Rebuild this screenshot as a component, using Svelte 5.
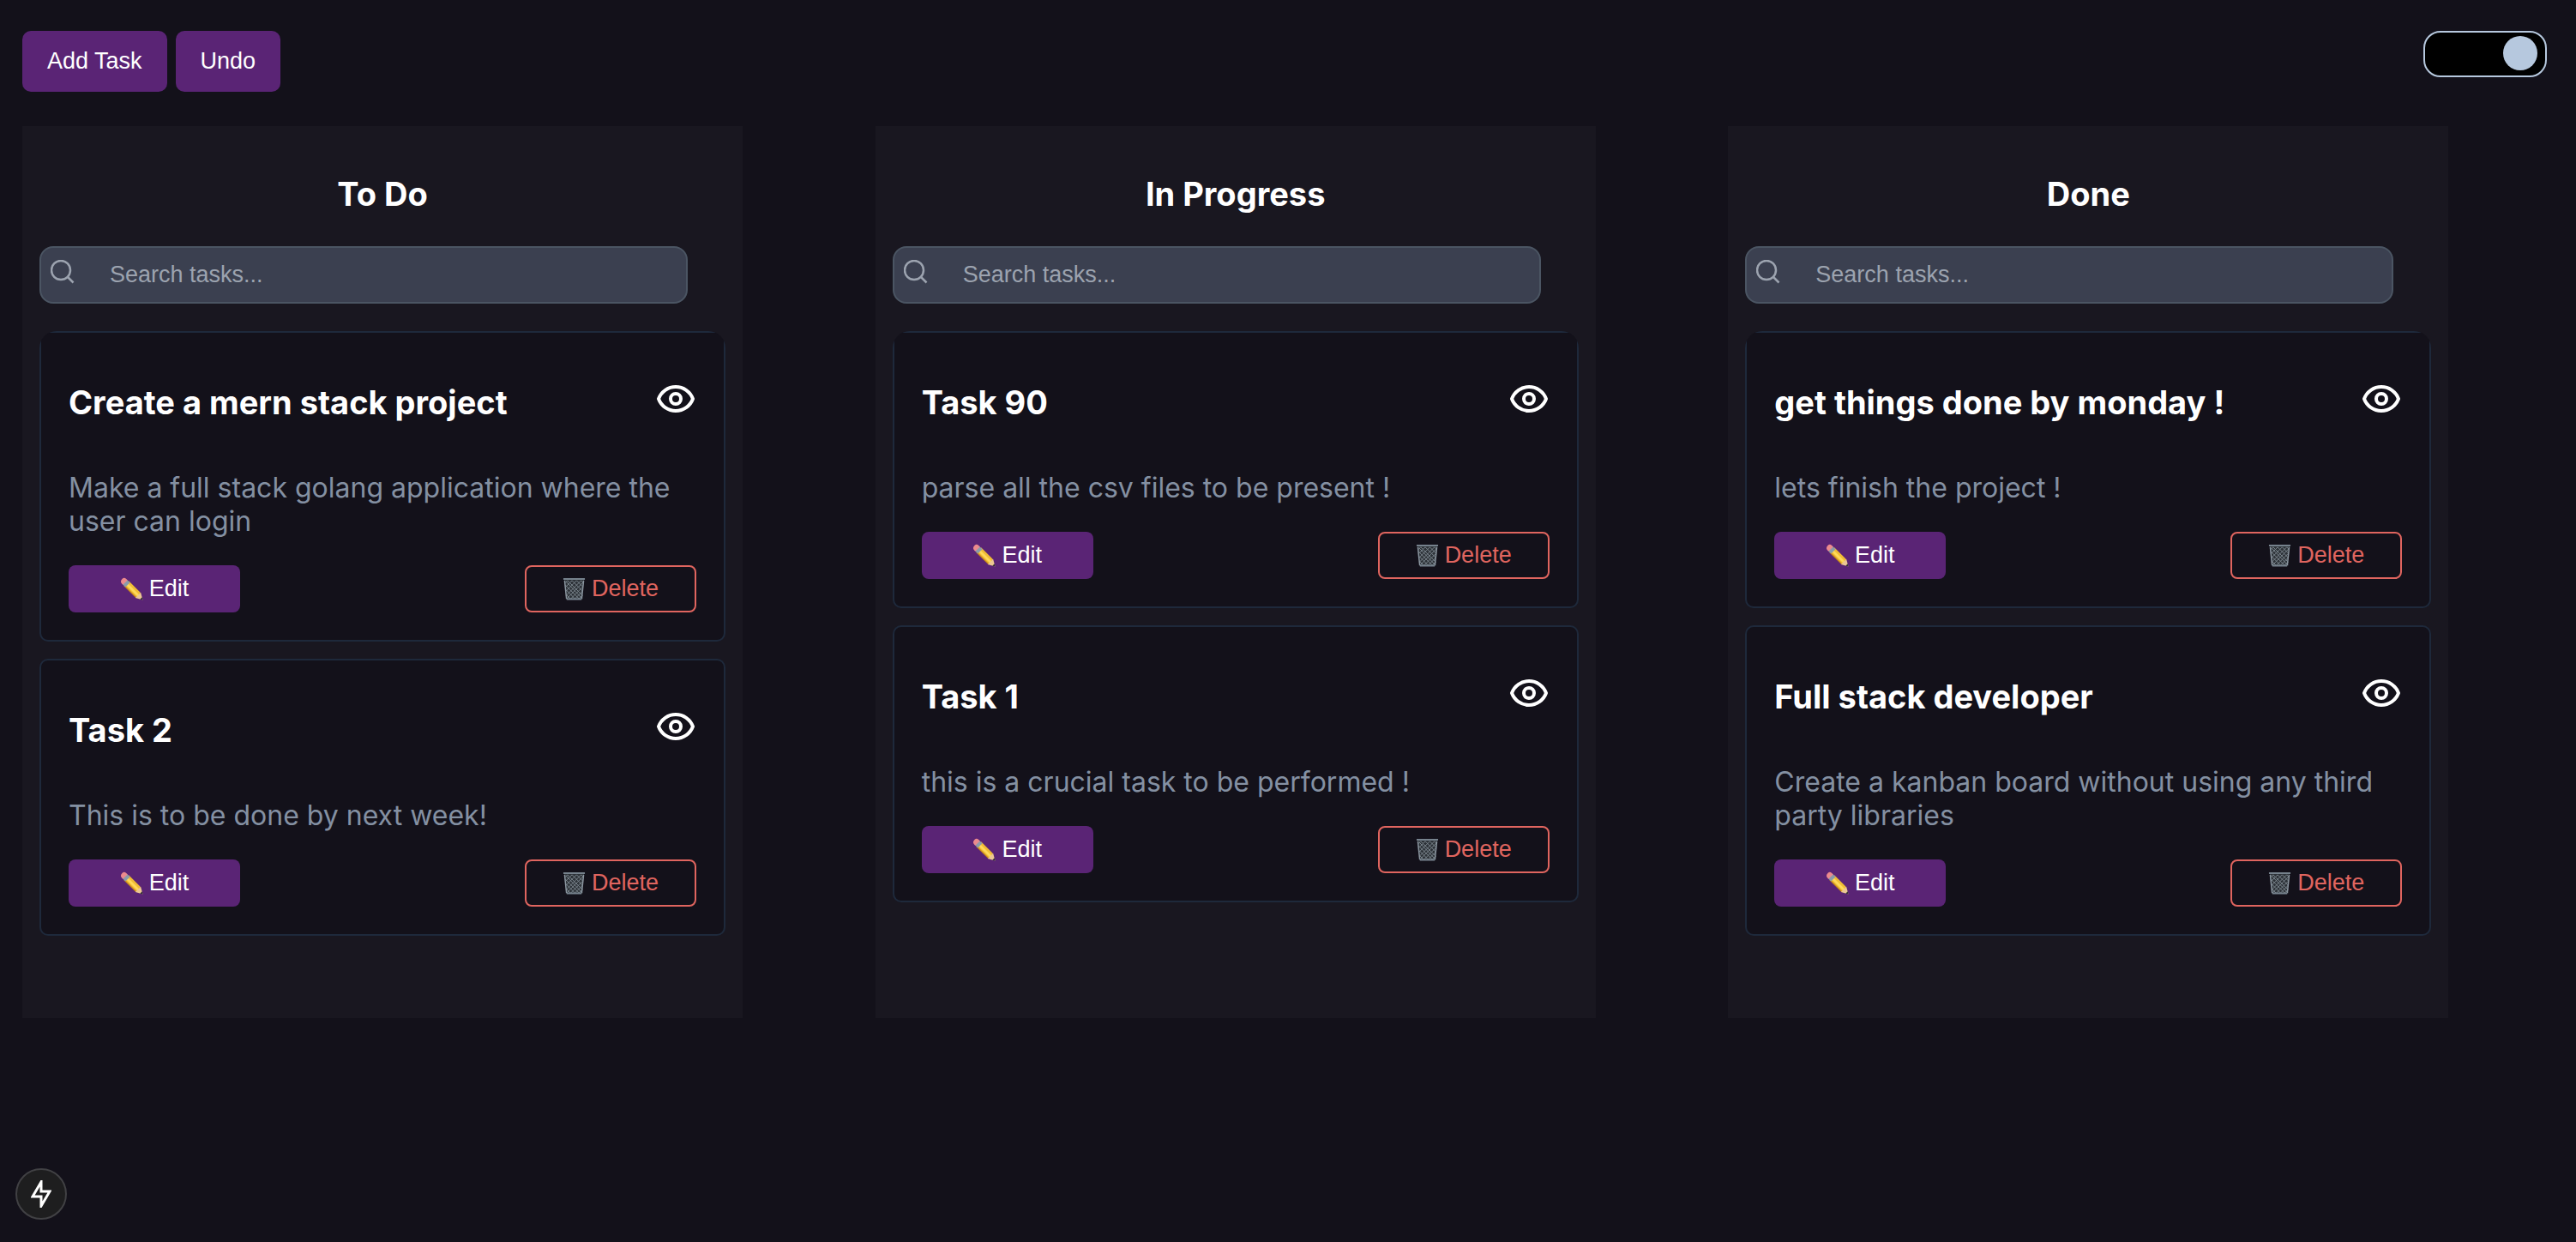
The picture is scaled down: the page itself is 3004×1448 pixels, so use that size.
<script>
  const columns = $state([
    {
      name: 'To Do',
      query: '',
      tasks: [
        { title: 'Create a mern stack project', text: 'Make a full stack golang application where the user can login' },
        { title: 'Task 2', text: 'This is to be done by next week!' }
      ]
    },
    {
      name: 'In Progress',
      query: '',
      tasks: [
        { title: 'Task 90', text: 'parse all the csv files to be present !' },
        { title: 'Task 1', text: 'this is a crucial task to be performed !' }
      ]
    },
    {
      name: 'Done',
      query: '',
      tasks: [
        { title: 'get things done by monday !', text: 'lets finish the project !' },
        { title: 'Full stack developer', text: 'Create a kanban board without using any third party libraries' }
      ]
    }
  ]);
  let dark = $state(true);
</script>

<div class="page">
  <header>
    <div class="actions">
      <button class="primary">Add Task</button>
      <button class="primary">Undo</button>
    </div>
    <input class="switch" type="checkbox" role="switch" aria-label="Dark theme" bind:checked={dark} />
  </header>

  <main>
    {#each columns as column}
      <section class="column">
        <h2>{column.name}</h2>
        <label class="search">
          <svg viewBox="0 0 28 28" aria-hidden="true">
            <circle cx="12" cy="12" r="11" />
            <path d="M20 20l6.500 6.500" />
          </svg>
          <input type="text" placeholder="Search tasks..." aria-label="Search tasks in {column.name}" bind:value={column.query} />
        </label>
        <div class="list">
          {#each column.tasks as task}
            <article class="card">
              <div class="head">
                <h3>{task.title}</h3>
                <button class="view" aria-label="View {task.title}">
                  <svg viewBox="0 0 44 32" aria-hidden="true">
                    <path d="M2 16A21.300 21.300 0 0 1 42 16A21.300 21.300 0 0 1 2 16z" />
                    <circle cx="22" cy="16" r="6" />
                  </svg>
                </button>
              </div>
              <p>{task.text}</p>
              <div class="buttons">
                <button class="edit">
                  <svg viewBox="0 0 28 28" aria-hidden="true">
                    <path fill="#f0bd35" d="M10.500 4.500L25 19l-5.500 5.500L5 10z" />
                    <path fill="#ffd95a" d="M8.500 6.500L23 21l-2 2L6.500 8.500z" />
                    <path fill="#c98a1c" d="M5.500 9.500l14.500 14.500-1 1L4.500 10.500z" />
                    <path fill="#8b9bab" d="M8 2.500l4 4-5.500 5.500-4-4z" />
                    <path fill="#ec8a8d" d="M2.500 2q2.500-2.300 5 0l1.500 1.500-5.500 5.500L2 7.500Q-.300 5 2.500 2z" />
                    <path fill="#ecc793" d="M25 18.500L27.500 27.500 18.500 25z" />
                    <path fill="#333136" d="M26.600 24.200l.900 3.300-3.300-.900z" />
                  </svg>
                  Edit
                </button>
                <button class="delete">
                  <svg viewBox="0 0 28 28" aria-hidden="true">
                    <path fill="#2d3238" d="M2 3h24l-2.500 24h-19z" />
                    <path
                      stroke="#7d8790"
                      d="M3 7l3-3 18 18M3.500 12L11.500 4 24 16.500M4 17L17 4l7.500 7.500M4.500 22L22.500 4l2.500 2.500M5 26L25 6M4 5l20 21M10 26l14-14M3.500 9.500L20 26M15 26l9-9M4 15l11 11M20 26l4-4M4.500 21l5 5"
                    />
                    <path stroke="#8a959f" stroke-width="1.500" d="M2.500 4l2.300 22M25.500 4l-2.300 22" />
                    <path stroke="#76828d" stroke-width="2" d="M1 2h26M5 26.500h18" />
                  </svg>
                  Delete
                </button>
              </div>
            </article>
          {/each}
        </div>
      </section>
    {/each}
  </main>

  <button class="badge" aria-label="Developer tools">
    <svg viewBox="0 0 24 32" aria-hidden="true">
      <path d="M12 2v11h10L12 30V19H2L12 2z" />
    </svg>
  </button>
</div>

<style>
  :global(body) {
    margin: 0;
    background: #13111a;
  }
  .page {
    min-height: 100vh;
    box-sizing: border-box;
    padding: 36px 26px;
    background: #13111a;
    color: #fff;
    font-family: Inter, sans-serif;
  }
  button,
  input {
    box-sizing: border-box;
    margin: 0;
    font-family: 'Liberation Sans', Arial, sans-serif;
    font-size: 27px;
  }
  button {
    cursor: pointer;
  }
  header {
    display: flex;
    justify-content: space-between;
    align-items: flex-start;
    padding-right: 8px;
    margin-bottom: 40px;
  }
  .actions {
    display: flex;
    gap: 10px;
  }
  .primary {
    padding: 20px 29px;
    border: 0;
    border-radius: 10px;
    background: #5a2475;
    color: #fff;
    line-height: 31px;
  }
  .switch {
    appearance: none;
    display: flex;
    justify-content: flex-end;
    width: 144px;
    height: 54px;
    padding: 4px 9px;
    border: 2px solid #b6c8de;
    border-radius: 20px;
    background: #000;
    cursor: pointer;
  }
  .switch:not(:checked) {
    justify-content: flex-start;
  }
  .switch::before {
    content: '';
    width: 40px;
    height: 40px;
    border-radius: 50%;
    background: #b6c8de;
  }
  main {
    display: grid;
    grid-template-columns: repeat(3, 1fr);
    gap: 32px;
  }
  .column {
    box-sizing: border-box;
    width: 100%;
    max-width: 840px;
    min-height: 1040px;
    padding: 56px 20px 20px;
    background: #191720;
  }
  h2,
  h3 {
    margin: 0;
    font-size: 38px;
    font-weight: 700;
    line-height: 46px;
  }
  h3 {
    line-height: 50px;
  }
  h2 {
    text-align: center;
  }
  .search {
    display: flex;
    align-items: flex-start;
    box-sizing: border-box;
    height: 67px;
    margin: 38px 44px 32px 0;
    padding-left: 11px;
    border: 2px solid #4b5563;
    border-radius: 16px;
    background: #3b4050;
  }
  .search svg {
    width: 28px;
    height: 28px;
    margin-top: 14px;
    fill: none;
    stroke: #9ca3af;
    stroke-width: 2.500;
    flex: none;
  }
  .search input {
    flex: 1;
    min-width: 0;
    align-self: stretch;
    padding: 0 0 0 41px;
    border: 0;
    outline: 0;
    background: none;
    color: #fff;
  }
  .search input::placeholder {
    color: #9ca3af;
    opacity: 1;
  }
  .list {
    display: flex;
    flex-direction: column;
    gap: 20px;
    border-radius: 20px 20px 0 0;
    overflow: hidden;
  }
  .card {
    padding: 56px 32px 32px;
    border: 2px solid #1e293b;
    border-radius: 10px;
    background: #13111a;
  }
  .head {
    display: flex;
    justify-content: space-between;
    align-items: flex-start;
    margin-bottom: 55px;
  }
  .view {
    display: flex;
    padding: 5px 2px;
    border: 0;
    background: none;
  }
  .view svg {
    width: 44px;
    height: 32px;
    fill: none;
    stroke: #fff;
    stroke-width: 4;
    stroke-linejoin: round;
  }
  p {
    margin: 0 0 32px;
    color: #8490a2;
    font-size: 32px;
    line-height: 39px;
  }
  .buttons {
    display: flex;
    justify-content: space-between;
  }
  .edit,
  .delete {
    display: flex;
    align-items: center;
    justify-content: center;
    gap: 7px;
    width: 200px;
    height: 55px;
    padding: 0;
    border: 0;
    border-radius: 8px;
    background: #5a2475;
    color: #fff;
  }
  .edit svg,
  .delete svg {
    width: 27px;
    height: 27px;
    fill: none;
  }
  .delete {
    border: 2px solid #e0655f;
    background: none;
    color: #e0655f;
  }
  .badge {
    position: fixed;
    left: 18px;
    bottom: 26px;
    display: flex;
    align-items: center;
    justify-content: center;
    width: 60px;
    height: 60px;
    padding: 0;
    border: 2px solid #414144;
    border-radius: 50%;
    background: #1e1e1f;
  }
  .badge svg {
    width: 24px;
    height: 32px;
    fill: none;
    stroke: #fff;
    stroke-width: 3;
  }
</style>
